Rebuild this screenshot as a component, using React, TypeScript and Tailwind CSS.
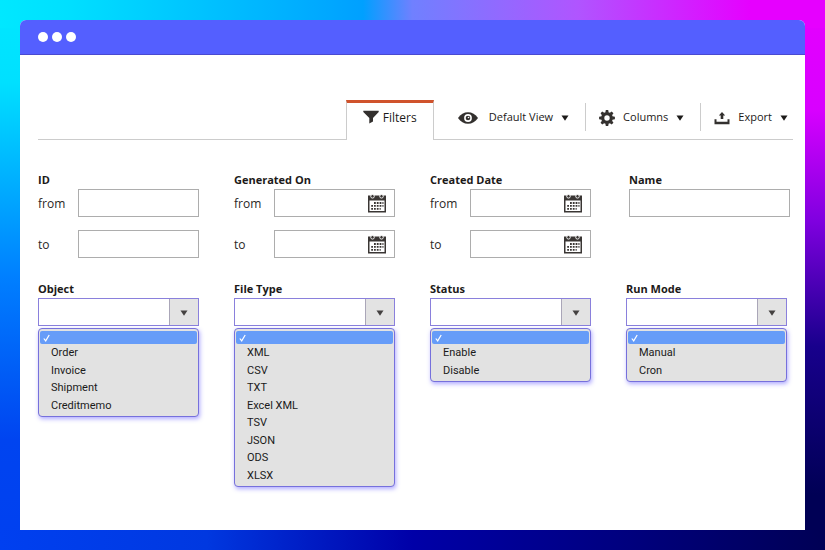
import type { ReactNode } from 'react';

function FunnelIcon() {
  return (
    <svg width="16" height="14" viewBox="0 0 16 14" fill="#33302e" aria-hidden="true">
      <path d="M0.3 0.8h15.4v1.2L10 8v3.6L6.3 13.6V8L0.3 2z" />
    </svg>
  );
}

function EyeIcon() {
  return (
    <svg width="20" height="14" viewBox="0 0 20 14" aria-hidden="true">
      <path d="M0 7C2.6 3.2 6 1.2 10 1.2S17.400 3.200 20 7C17.400 10.800 14 12.800 10 12.800S2.600 10.800 0 7z" fill="#33302e" />
      <circle cx="10" cy="7" r="3.900" fill="#fff" />
      <circle cx="10" cy="7" r="2.300" fill="#33302e" />
      <circle cx="10.500" cy="6.500" r="0.800" fill="#fff" />
    </svg>
  );
}

const TEETH = [0, 45, 90, 135, 180, 225, 270, 315];

function GearIcon() {
  return (
    <svg width="16" height="16" viewBox="0 0 16 16" aria-hidden="true">
      <circle cx="8" cy="8" r="4.300" fill="none" stroke="#33302e" strokeWidth="3.200" />
      {TEETH.map((angle) => (
        <path key={angle} d="M6.300 2.800L6.800 0.100h2.400l0.500 2.700z" fill="#33302e" transform={`rotate(${angle} 8 8)`} />
      ))}
    </svg>
  );
}

function ExportIcon() {
  return (
    <svg width="16" height="14" viewBox="0 0 16 14" fill="#33302e" aria-hidden="true">
      <path d="M8 1l3.200 3.600H9.300V8H6.700V4.600H4.800z" />
      <path d="M0.500 8.200h2v2.600h11V8.200h2v5h-15z" />
    </svg>
  );
}

function CalendarIcon() {
  return (
    <svg width="18" height="19" viewBox="0 0 18 19" aria-hidden="true">
      <path d="M0 1.500h18v17H0z" fill="#3a3634" />
      <path d="M1.500 6.500h15v10.500h-15z" fill="#fff" />
      <circle cx="4.500" cy="2.300" r="1.800" fill="#3a3634" stroke="#fff" strokeWidth="0.900" />
      <circle cx="13.500" cy="2.300" r="1.800" fill="#3a3634" stroke="#fff" strokeWidth="0.900" />
      <path
        d="M6 9h9.500M3.200 11.900h12.300M3.200 14.800h9.500"
        fill="none"
        stroke="#3a3634"
        strokeWidth="1.800"
        strokeDasharray="1.800 1"
      />
    </svg>
  );
}

function Caret() {
  return (
    <svg width="8" height="6" viewBox="0 0 8 6" aria-hidden="true">
      <path d="M0.500 0.500h7L4 5.800z" fill="currentColor" />
    </svg>
  );
}

function ToolButton({ icon, label, className }: { icon: ReactNode; label: string; className: string }) {
  return (
    <button type="button" className={`flex h-7 items-center gap-2 pt-px text-[11px] text-[#1c1a19] ${className}`}>
      {icon}
      <span>{label}</span>
      <Caret />
    </button>
  );
}

function RangeRow({ id, label, date }: { id: string; label: string; date?: boolean }) {
  return (
    <div className="flex h-7 items-center">
      <label htmlFor={id} className="w-10 shrink-0 pt-px text-xs text-[#2a2725]">
        {label}
      </label>
      <div className="flex h-full min-w-0 flex-1 items-center border border-[#adadad] pr-2">
        <input id={id} type="text" className="h-full min-w-0 flex-1 px-2 text-xs outline-none" />
        {date && (
          <button type="button" aria-label="Open calendar">
            <CalendarIcon />
          </button>
        )}
      </div>
    </div>
  );
}

function RangeField({ id, title, date }: { id: string; title: string; date?: boolean }) {
  return (
    <fieldset className="min-w-0">
      <legend className="h-5 pt-[2px] text-[11px] leading-[18px] font-bold text-[#1c1a19]">{title}</legend>
      <div className="flex flex-col gap-[13px]">
        <RangeRow id={`${id}-from`} label="from" date={date} />
        <RangeRow id={`${id}-to`} label="to" date={date} />
      </div>
    </fieldset>
  );
}

function SelectField({ id, title, options }: { id: string; title: string; options: string[] }) {
  return (
    <div className="min-w-0">
      <label htmlFor={id} className="block h-5 pt-[2px] text-[11px] leading-[18px] font-bold text-[#1c1a19]">
        {title}
      </label>
      <div className="grid h-7 grid-cols-[1fr_29px] border border-[#8a80dc]">
        <select id={id} className="col-span-2 col-start-1 row-start-1 h-full w-full appearance-none px-2 text-xs outline-none">
          <option value=""></option>
          {options.map((o) => (
            <option key={o}>{o}</option>
          ))}
        </select>
        <span className="pointer-events-none col-start-2 row-start-1 flex items-center justify-center border-l border-[#aaa6b8] bg-[#e3e3e3] pt-[2px] text-[#444140]">
          <Caret />
        </span>
      </div>
      <div className="mt-[2px] rounded border border-[#7670dc] bg-[#e2e2e2] px-px pt-[2px] pb-px shadow-[1px_2px_4px_rgba(100,90,255,0.5)]">
        <div className="flex h-[13px] items-center rounded-[2px] bg-[#669cf8] pl-[3px]">
          <svg width="7" height="8" viewBox="0 0 7 8" aria-hidden="true">
            <path d="M0.800 4.500l1.900 2.400L6.200 1" fill="none" stroke="#fff" strokeWidth="1.200" />
          </svg>
        </div>
        <ul role="listbox" aria-label={title} className="pt-px font-['Roboto',sans-serif] text-[11px] text-[#1a1a1a]">
          {options.map((o) => (
            <li key={o} role="option" aria-selected="false" className="flex h-[17px] items-center pl-[11px] even:h-[18px]">
              {o}
            </li>
          ))}
        </ul>
      </div>
    </div>
  );
}

const SELECTS = [
  { id: 'object', title: 'Object', options: ['Order', 'Invoice', 'Shipment', 'Creditmemo'] },
  { id: 'file-type', title: 'File Type', options: ['XML', 'CSV', 'TXT', 'Excel XML', 'TSV', 'JSON', 'ODS', 'XLSX'] },
  { id: 'status', title: 'Status', options: ['Enable', 'Disable'] },
  { id: 'run-mode', title: 'Run Mode', options: ['Manual', 'Cron'] },
];

export default function App() {
  return (
    <div className="flex min-h-screen bg-[linear-gradient(to_right,#00e8ff_0%,#00e0ff_8%,#00a0ff_44%,#7080ff_50%,#b055ff_70%,#e600ff_91%,#e600ff_100%),linear-gradient(to_right,#0040f0_0%,#0038e0_25%,#0000a8_50%,#000080_75%,#000055_100%),linear-gradient(to_bottom,#00e8ff_0%,#00e0ff_15%,#0080ff_50%,#0044f0_80%,#0040f0_100%),linear-gradient(to_bottom,#e600ff_0%,#d800ff_20%,#8000e0_40%,#18008c_63%,#000055_90%)] bg-[length:100%_28px,100%_20px,20px_100%,20px_100%] bg-[position:top,bottom,left,right] bg-no-repeat p-5 font-['Open_Sans',sans-serif]">
      <div className="flex flex-1 flex-col overflow-hidden rounded-t-md bg-white">
        <header className="flex h-[35px] items-center gap-1 border-b border-[#4a4ad0] bg-[#545fff] pl-[18px]">
          <span className="size-[10px] rounded-full bg-white" />
          <span className="size-[10px] rounded-full bg-white" />
          <span className="size-[10px] rounded-full bg-white" />
        </header>

        <main className="pt-[45px] pr-3 pl-[18px]">
          <nav className="flex h-10 justify-end border-b border-[#cccccc]">
            <button
              type="button"
              className="-mb-px flex w-[88px] items-start justify-center gap-1 border-x border-t-[3px] border-x-[#cccccc] border-t-[#d0532c] bg-white pt-[7px] text-xs text-[#1c1a19]"
            >
              <FunnelIcon />
              <span>Filters</span>
            </button>
            <div className="flex pt-[3px]">
              <ToolButton icon={<EyeIcon />} label="Default View" className="pr-4 pl-6 [&>span]:pl-[3px]" />
              <ToolButton icon={<GearIcon />} label="Columns" className="border-l border-[#cccccc] pr-4 pl-[13px]" />
              <ToolButton icon={<ExportIcon />} label="Export" className="border-l border-[#cccccc] pr-[5px] pl-[13px]" />
            </div>
          </nav>

          <form>
            <div className="flex gap-[38px] pt-[29px] pr-[3px]">
              <div className="grid min-w-0 flex-[553] grid-cols-3 gap-[35px]">
                <RangeField id="id" title="ID" />
                <RangeField id="generated" title="Generated On" date />
                <RangeField id="created" title="Created Date" date />
              </div>
              <div className="min-w-0 flex-[161]">
                <label htmlFor="name" className="block h-5 pt-[2px] text-[11px] leading-[18px] font-bold text-[#1c1a19]">
                  Name
                </label>
                <input id="name" type="text" className="h-7 w-full border border-[#adadad] px-2 text-xs outline-none" />
              </div>
            </div>
            <div className="grid grid-cols-4 items-start gap-[35px] pt-5 pr-[6px]">
              {SELECTS.map((s) => (
                <SelectField key={s.id} id={s.id} title={s.title} options={s.options} />
              ))}
            </div>
          </form>
        </main>
      </div>
    </div>
  );
}
